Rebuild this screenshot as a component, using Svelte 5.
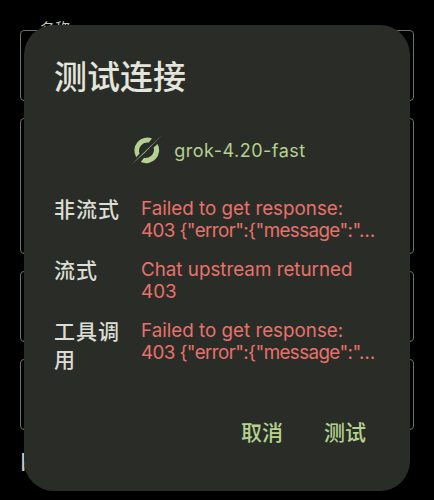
<script>
  const failedLines = ["Failed to get response:", '403 {"error":{"message":"…'];
  const results = [
    { label: "非流式", lines: failedLines },
    { label: "流式", lines: ["Chat upstream returned", "403"] },
    { label: "工具调用", lines: failedLines },
  ];
  const fields = [71, 136, 71, 71];
</script>

<div class="page">
  <div class="form">
    {#each fields as height}
      <div class="field" style="height: {height}px"></div>
    {/each}
  </div>
  <span class="field-label">名称</span>
  <span class="behind-text">F</span>

  <div class="dialog">
    <h2 class="title">测试连接</h2>

    <div class="model">
      <svg class="model-icon" viewBox="0 0 32 32" width="32" height="32">
        <path
          d="M22 4.4 A13 13 0 0 0 6.2 23.2 L9.6 19.6 A8.2 8.2 0 0 1 18.8 8.6 Z"
          fill="#b5d190"
        />
        <path
          d="M10.8 28 A13 13 0 0 0 27.6 10 L23.6 13.4 A8.2 8.2 0 0 1 14 23.8 Z"
          fill="#b5d190"
        />
        <path d="M32 1 L1 31 L14.5 19 Z" fill="#b5d190" />
      </svg>
      <span class="model-name">grok-4.20-fast</span>
    </div>

    <div class="results">
      {#each results as row}
        <div class="row">
          <span class="row-label">{row.label}</span>
          <div class="row-text">
            {#each row.lines as line}
              <div class="row-line" class:tight={line.includes("{")}>{line}</div>
            {/each}
          </div>
        </div>
      {/each}
    </div>

    <div class="actions">
      <button class="action">取消</button>
      <button class="action">测试</button>
    </div>
  </div>
</div>

<style>
  :global(body) {
    margin: 0;
    background: #000;
  }

  .page {
    position: relative;
    width: 434px;
    height: 500px;
    overflow: hidden;
    background: #000;
    font-family: "Inter", "Noto Sans CJK SC", sans-serif;
  }

  .form {
    display: flex;
    flex-direction: column;
    gap: 17px;
    padding: 30px 20px 0;
  }

  .field {
    border: 1px solid #6f716b;
    border-radius: 4px;
    box-sizing: border-box;
  }

  .field-label {
    position: absolute;
    left: 40px;
    top: 19px;
    font-size: 15px;
    line-height: 20px;
    color: #c6c8c0;
  }

  .behind-text {
    position: absolute;
    left: 20px;
    top: 450px;
    font-size: 24px;
    line-height: 26px;
    color: #c6c8c0;
  }

  .dialog {
    position: absolute;
    left: 24px;
    top: 25px;
    width: 386px;
    height: 466px;
    box-sizing: border-box;
    padding: 30px 30px 0;
    background: #2a2d27;
    border-radius: 30px;
  }

  .title {
    margin: 0;
    font-size: 33px;
    font-weight: 500;
    line-height: 44px;
    color: #e4e5dd;
  }

  .model {
    display: flex;
    align-items: center;
    justify-content: center;
    gap: 12px;
    margin-top: 35px;
    padding-left: 2px;
    height: 32px;
  }

  .model-icon {
    flex-shrink: 0;
  }

  .model-name {
    font-size: 18px;
    letter-spacing: 0.5px;
    color: #b5d190;
  }

  .results {
    display: flex;
    flex-direction: column;
    gap: 17px;
    margin-top: 32px;
  }

  .row {
    display: flex;
    gap: 20px;
  }

  .row-label {
    width: 67px;
    flex-shrink: 0;
    margin-top: -2px;
    font-size: 21px;
    font-weight: 500;
    letter-spacing: 1px;
    line-height: 28px;
    color: #dcddd5;
  }

  .row-text {
    font-size: 18.8px;
    line-height: 22px;
    color: #e8716b;
  }

  .row-line {
    white-space: nowrap;
  }

  .tight {
    letter-spacing: -0.6px;
  }

  .actions {
    display: flex;
    justify-content: flex-end;
    gap: 41px;
    margin-top: 45px;
    padding-right: 14px;
  }

  .action {
    padding: 0;
    border: none;
    background: none;
    font: inherit;
    font-size: 21px;
    font-weight: 500;
    line-height: 28px;
    color: #b5d190;
  }
</style>
